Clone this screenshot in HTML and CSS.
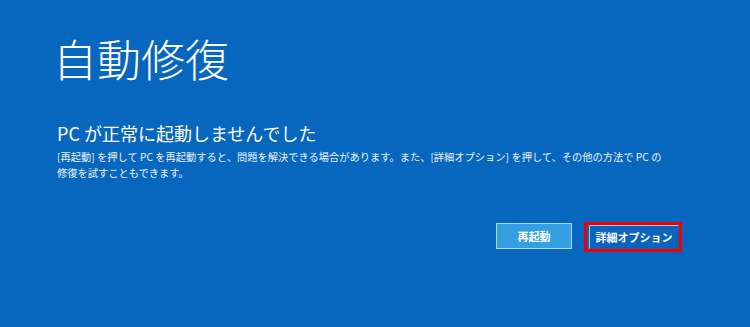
FILE: index.html
```html
<!DOCTYPE html>
<html lang="ja">
<head>
<meta charset="utf-8">
<title>自動修復</title>
<link rel="stylesheet" href="styles.css">
</head>
<body>
<div class="screen">
  <h1 class="title">自動修復</h1>
  <h2 class="subtitle">PC が正常に起動しませんでした</h2>
  <p class="message"><span class="line">[再起動] を押して PC を再起動すると、問題を解決できる場合があります。また、[詳細オプション] を押して、その他の方法で PC の</span><span class="line">修復を試すこともできます。</span></p>
  <div class="actions">
    <button class="btn btn-primary">再起動</button>
    <div class="highlight"><button class="btn btn-secondary">詳細オプション</button></div>
  </div>
</div>
</body>
</html>
```
FILE: styles.css
```css
html, body {
  margin: 0;
  padding: 0;
  background: #0766bd;
}
body {
  width: 750px;
  height: 327px;
  overflow: hidden;
  font-family: "Noto Sans CJK JP", "Noto Sans", sans-serif;
  color: #ffffff;
}
.screen {
  padding: 32px 0 0 57px;
}
.title {
  margin: 0 0 0 -4px;
  font-size: 44px;
  font-weight: 300;
  line-height: 52px;
}
.subtitle {
  margin: 38px 0 0 0;
  font-size: 18px;
  font-weight: 400;
  line-height: 22px;
}
.message {
  margin: 5px 0 0 0;
  font-size: 10.25px;
  line-height: 16px;
  color: #eaf2fb;
}
.line {
  display: block;
  white-space: nowrap;
}
.actions {
  display: flex;
  justify-content: flex-end;
  align-items: flex-start;
  gap: 12px;
  margin-top: 41px;
  padding-right: 68px;
}
.btn {
  font-family: "Noto Sans CJK JP", sans-serif;
  font-size: 11px;
  font-weight: 700;
  color: #ffffff;
  padding: 0;
  cursor: pointer;
}
.btn-primary {
  width: 76px;
  height: 26px;
  margin-top: 1px;
  background: #34a0e2;
  border: 1px solid #a9dbf7;
}
.highlight {
  display: flex;
  border: 3px solid #f20000;
  padding: 0 0 0 2px;
}
.btn-secondary {
  width: 90px;
  height: 24px;
  background: #0b63be;
  border: 1px solid #9cc8ef;
  border-right-color: #0b63be;
  border-bottom-color: #0b63be;
}
```
